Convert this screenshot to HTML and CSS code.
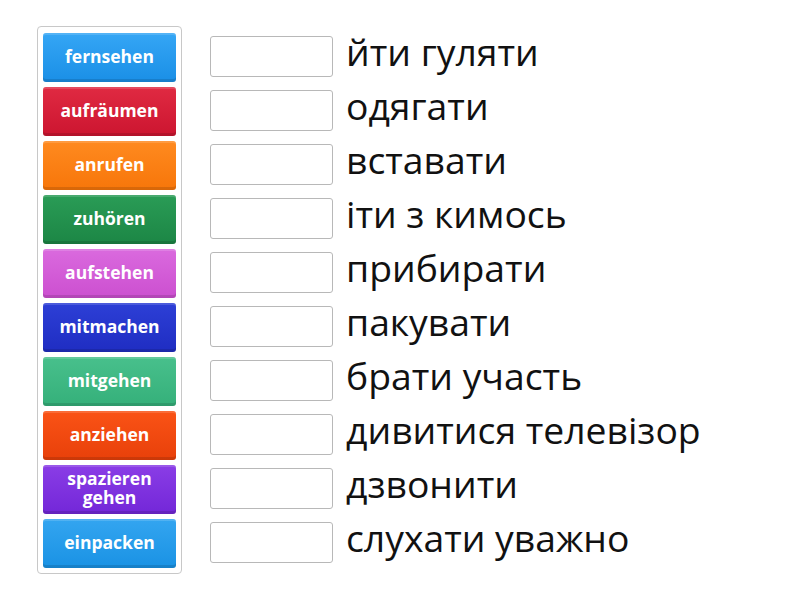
FILE: index.html
```html
<!DOCTYPE html>
<html>
<head>
<meta charset="utf-8">
<link rel="stylesheet" href="styles.css">
</head>
<body>
<div class="page">
  <div class="bank">
    <div class="tile c1">fernsehen</div>
    <div class="tile c2">aufräumen</div>
    <div class="tile c3">anrufen</div>
    <div class="tile c4">zuhören</div>
    <div class="tile c5">aufstehen</div>
    <div class="tile c6">mitmachen</div>
    <div class="tile c7">mitgehen</div>
    <div class="tile c8">anziehen</div>
    <div class="tile c9">spazieren<br>gehen</div>
    <div class="tile c10">einpacken</div>
  </div>
  <div class="targets">
    <div class="row"><div class="slot"></div><div class="label">йти гуляти</div></div>
    <div class="row"><div class="slot"></div><div class="label">одягати</div></div>
    <div class="row"><div class="slot"></div><div class="label">вставати</div></div>
    <div class="row"><div class="slot"></div><div class="label">іти з кимось</div></div>
    <div class="row"><div class="slot"></div><div class="label">прибирати</div></div>
    <div class="row"><div class="slot"></div><div class="label">пакувати</div></div>
    <div class="row"><div class="slot"></div><div class="label">брати участь</div></div>
    <div class="row"><div class="slot"></div><div class="label">дивитися телевізор</div></div>
    <div class="row"><div class="slot"></div><div class="label">дзвонити</div></div>
    <div class="row"><div class="slot"></div><div class="label">слухати уважно</div></div>
  </div>
</div>
</body>
</html>
```

FILE: styles.css
```css
html, body {
  margin: 0;
  padding: 0;
  background: #fff;
}
.page {
  display: flex;
  align-items: flex-start;
  padding: 26px 0 0 37px;
  font-family: "Open Sans", "Noto Sans", sans-serif;
}
.bank {
  width: 133px;
  border: 1px solid #c8c8c8;
  border-radius: 4px;
  padding: 6px 5px 5px 5px;
  display: flex;
  flex-direction: column;
  gap: 5px;
}
.tile {
  box-sizing: border-box;
  width: 133px;
  height: 49px;
  border-radius: 3px;
  display: flex;
  align-items: center;
  justify-content: center;
  text-align: center;
  color: #fff;
  font-weight: 700;
  font-size: 17.5px;
  line-height: 19px;
  padding-bottom: 2px;
  box-shadow: inset 0 -3px 0 rgba(0,0,0,0.12), inset 0 2px 0 rgba(255,255,255,0.15);
}
.c1 { background: linear-gradient(#35a6f5, #1a8fe6); }
.c2 { background: linear-gradient(#e02a42, #cc1530); }
.c3 { background: linear-gradient(#ff8a1f, #f7760a); }
.c4 { background: linear-gradient(#2a9c56, #1c8645); }
.c5 { background: linear-gradient(#da6ade, #cc4fd0); }
.c6 { background: linear-gradient(#2d3fd6, #1f2dc2); }
.c7 { background: linear-gradient(#48c08c, #35b07a); }
.c8 { background: linear-gradient(#fa5316, #e8400a); }
.c9 { background: linear-gradient(#8a3de6, #7327d8); padding-bottom: 4px; }
.c10 { background: linear-gradient(#33a5f0, #1a92e4); }

.targets {
  display: flex;
  flex-direction: column;
  gap: 5px;
  padding-top: 7px;
  margin-left: 28px;
}
.row {
  height: 49px;
  display: flex;
  align-items: center;
}
.slot {
  box-sizing: border-box;
  width: 123px;
  height: 41px;
  margin-top: -2px;
  border: 1px solid #b8b8b8;
  border-radius: 3px;
  background: #fff;
}
.label {
  margin-left: 13px;
  font-size: 37.3px;
  line-height: 50px;
  color: #111;
  white-space: nowrap;
  margin-top: -12px;
}
```
